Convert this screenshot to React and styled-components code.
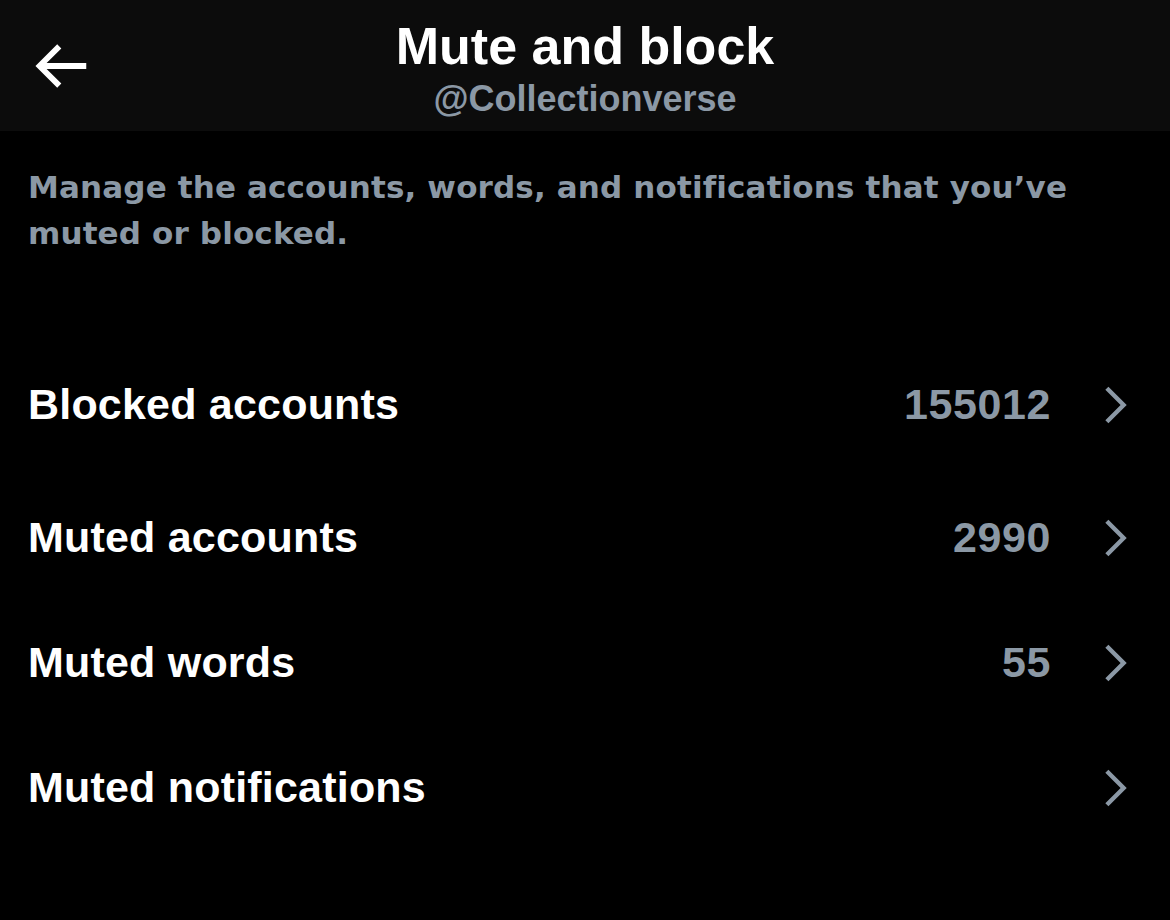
import React from "react";
import styled, { createGlobalStyle } from "styled-components";

const Global = createGlobalStyle`
  html, body { margin: 0; padding: 0; background: #000; }
  body { width: 1170px; height: 920px; overflow: hidden; }
  * { box-sizing: border-box; }
`;

const Page = styled.div`
  width: 1170px;
  height: 920px;
  background: #000;
  display: flex;
  flex-direction: column;
  font-family: "Liberation Sans", Arial, sans-serif;
`;

const Header = styled.header`
  height: 131px;
  background: #0c0c0c;
  display: grid;
  grid-template-columns: 1fr auto 1fr;
  align-items: center;
`;

const BackButton = styled.button`
  justify-self: start;
  margin-left: 25px;
  width: 70px;
  height: 70px;
  padding: 0;
  border: none;
  background: transparent;
  display: flex;
  align-items: center;
  justify-content: center;
  color: #fff;
  svg { display: block; }
`;

const TitleBlock = styled.div`
  display: flex;
  flex-direction: column;
  align-items: center;
  padding-top: 4px;
`;

const Title = styled.h1`
  margin: 0;
  font-size: 52px;
  line-height: 60px;
  font-weight: 700;
  color: #fff;
  white-space: nowrap;
`;

const Handle = styled.div`
  margin-top: 3px;
  font-size: 36px;
  line-height: 40px;
  font-weight: 700;
  color: #8b98a5;
  white-space: nowrap;
`;

const Description = styled.p`
  margin: 33px 0 0;
  padding: 0 28px;
  font-family: "DejaVu Sans", "Liberation Sans", sans-serif;
  font-size: 31px;
  line-height: 46px;
  font-weight: 700;
  letter-spacing: 0.14px;
  color: #8b98a5;
`;

const List = styled.div`
  margin-top: 78px;
  display: flex;
  flex-direction: column;
`;

const Row = styled.div`
  height: ${(p) => p.$h}px;
  display: flex;
  align-items: center;
  padding: 0 29px 0 28px;
`;

const Label = styled.span`
  flex: 1;
  font-size: 43px;
  font-weight: 700;
  letter-spacing: 0.2px;
  color: #fff;
  white-space: nowrap;
`;

const Count = styled.span`
  font-size: 43px;
  font-weight: 700;
  letter-spacing: 0.6px;
  color: #8b98a5;
  margin-right: 38px;
`;

const Chevron = styled.svg`
  width: 52px;
  height: 52px;
  flex: none;
  display: block;
  fill: #8b98a5;
`;

const ArrowLeft = () => (
  <svg width="70" height="70" viewBox="0 0 24 24" fill="#fff">
    <path d="M7.414 13l5.043 5.04-1.414 1.42L3.586 12l7.457-7.46 1.414 1.42L7.414 11H21v2H7.414z" />
  </svg>
);

const rows = [
  { label: "Blocked accounts", count: "155012", h: 141 },
  { label: "Muted accounts", count: "2990", h: 125 },
  { label: "Muted words", count: "55", h: 125 },
  { label: "Muted notifications", count: "", h: 125 },
];

export default function App() {
  return (
    <Page>
      <Global />
      <Header>
        <BackButton aria-label="Back">
          <ArrowLeft />
        </BackButton>
        <TitleBlock>
          <Title>Mute and block</Title>
          <Handle>@Collectionverse</Handle>
        </TitleBlock>
        <div />
      </Header>
      <Description>
        Manage the accounts, words, and notifications that you’ve muted or blocked.
      </Description>
      <List>
        {rows.map((r) => (
          <Row key={r.label} $h={r.h}>
            <Label>{r.label}</Label>
            {r.count && <Count>{r.count}</Count>}
            <Chevron viewBox="0 0 24 24">
              <path d="M14.586 12L7.543 4.96l1.414-1.42L17.414 12l-8.457 8.46-1.414-1.42L14.586 12z" />
            </Chevron>
          </Row>
        ))}
      </List>
    </Page>
  );
}
